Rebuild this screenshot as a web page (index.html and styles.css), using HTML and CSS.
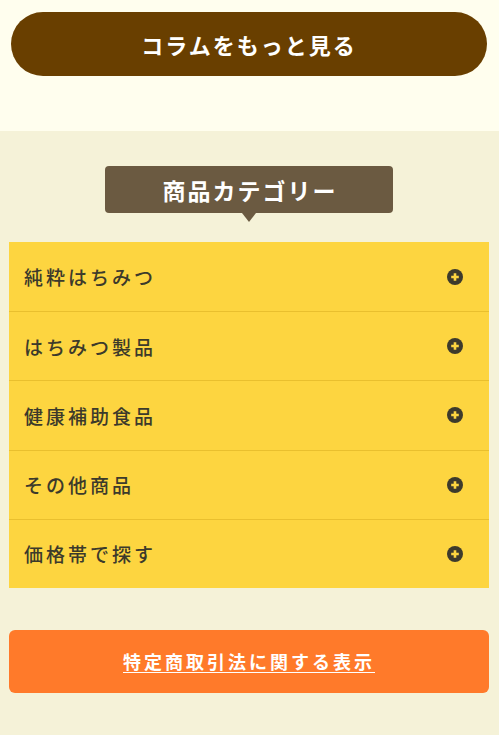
FILE: index.html
```html
<!DOCTYPE html>
<html lang="ja">
<head>
<meta charset="utf-8">
<link rel="stylesheet" href="styles.css">
</head>
<body>
<section class="top">
  <a class="more-btn" href="#">コラムをもっと見る</a>
</section>
<section class="cats">
  <div class="heading-wrap"><h2 class="heading">商品カテゴリー</h2></div>
  <ul class="cat-list">
    <li class="cat-item"><span>純粋はちみつ</span><svg class="plus" viewBox="0 0 16 16"><circle cx="8" cy="8" r="8" fill="#3d3a2c"/><path d="M8 4.2v7.6M4.2 8h7.6" stroke="#fdd540" stroke-width="2.6"/></svg></li>
    <li class="cat-item"><span>はちみつ製品</span><svg class="plus" viewBox="0 0 16 16"><circle cx="8" cy="8" r="8" fill="#3d3a2c"/><path d="M8 4.2v7.6M4.2 8h7.6" stroke="#fdd540" stroke-width="2.6"/></svg></li>
    <li class="cat-item"><span>健康補助食品</span><svg class="plus" viewBox="0 0 16 16"><circle cx="8" cy="8" r="8" fill="#3d3a2c"/><path d="M8 4.2v7.6M4.2 8h7.6" stroke="#fdd540" stroke-width="2.6"/></svg></li>
    <li class="cat-item"><span>その他商品</span><svg class="plus" viewBox="0 0 16 16"><circle cx="8" cy="8" r="8" fill="#3d3a2c"/><path d="M8 4.2v7.6M4.2 8h7.6" stroke="#fdd540" stroke-width="2.6"/></svg></li>
    <li class="cat-item"><span>価格帯で探す</span><svg class="plus" viewBox="0 0 16 16"><circle cx="8" cy="8" r="8" fill="#3d3a2c"/><path d="M8 4.2v7.6M4.2 8h7.6" stroke="#fdd540" stroke-width="2.6"/></svg></li>
  </ul>
  <a class="law-btn" href="#">特定商取引法に関する表示</a>
</section>
</body>
</html>
```
FILE: styles.css
```css
html, body {
  margin: 0;
  padding: 0;
}
body {
  font-family: "Noto Sans CJK JP", "Noto Sans", sans-serif;
  background: #f5f2d8;
}
.top {
  background: #fffeee;
  padding: 12px 12px 55px 11px;
}
.more-btn {
  display: flex;
  align-items: center;
  justify-content: center;
  height: 64px;
  border-radius: 32px;
  background: #693f00;
  color: #fff;
  font-size: 22px;
  font-weight: 700;
  letter-spacing: 2px;
  text-decoration: none;
}
.cats {
  background: #f5f2d8;
  padding: 35px 10px 42px 9px;
}
.heading-wrap {
  display: flex;
  justify-content: center;
}
.heading {
  position: relative;
  margin: 0;
  width: 288px;
  height: 47px;
  box-sizing: border-box;
  display: flex;
  align-items: center;
  justify-content: center;
  background: #6b5a41;
  border-radius: 4px;
  color: #fff;
  font-size: 23px;
  font-weight: 700;
  letter-spacing: 2px;
  padding-left: 2px;
}
.heading::after {
  content: "";
  position: absolute;
  left: 50%;
  bottom: -9px;
  margin-left: -7px;
  border-left: 7px solid transparent;
  border-right: 7px solid transparent;
  border-top: 9px solid #6b5a41;
}
.cat-list {
  list-style: none;
  margin: 29px 0 0;
  padding: 0;
  background: #fdd540;
}
.cat-item {
  display: flex;
  align-items: center;
  justify-content: space-between;
  box-sizing: border-box;
  height: 69.2px;
  padding: 0 26px 0 15px;
  border-top: 1px solid #e9bf2e;
  color: #3c3a2b;
  font-size: 19px;
  font-weight: 500;
  letter-spacing: 3px;
}
.cat-item:first-child {
  border-top: none;
}
.plus {
  width: 16px;
  height: 16px;
}
.law-btn {
  display: flex;
  align-items: center;
  justify-content: center;
  margin-top: 42px;
  height: 63px;
  border-radius: 6px;
  background: #ff7a2a;
  color: #fff;
  font-size: 18px;
  font-weight: 700;
  letter-spacing: 3px;
  text-decoration: underline;
  text-underline-offset: 3px;
}
```
